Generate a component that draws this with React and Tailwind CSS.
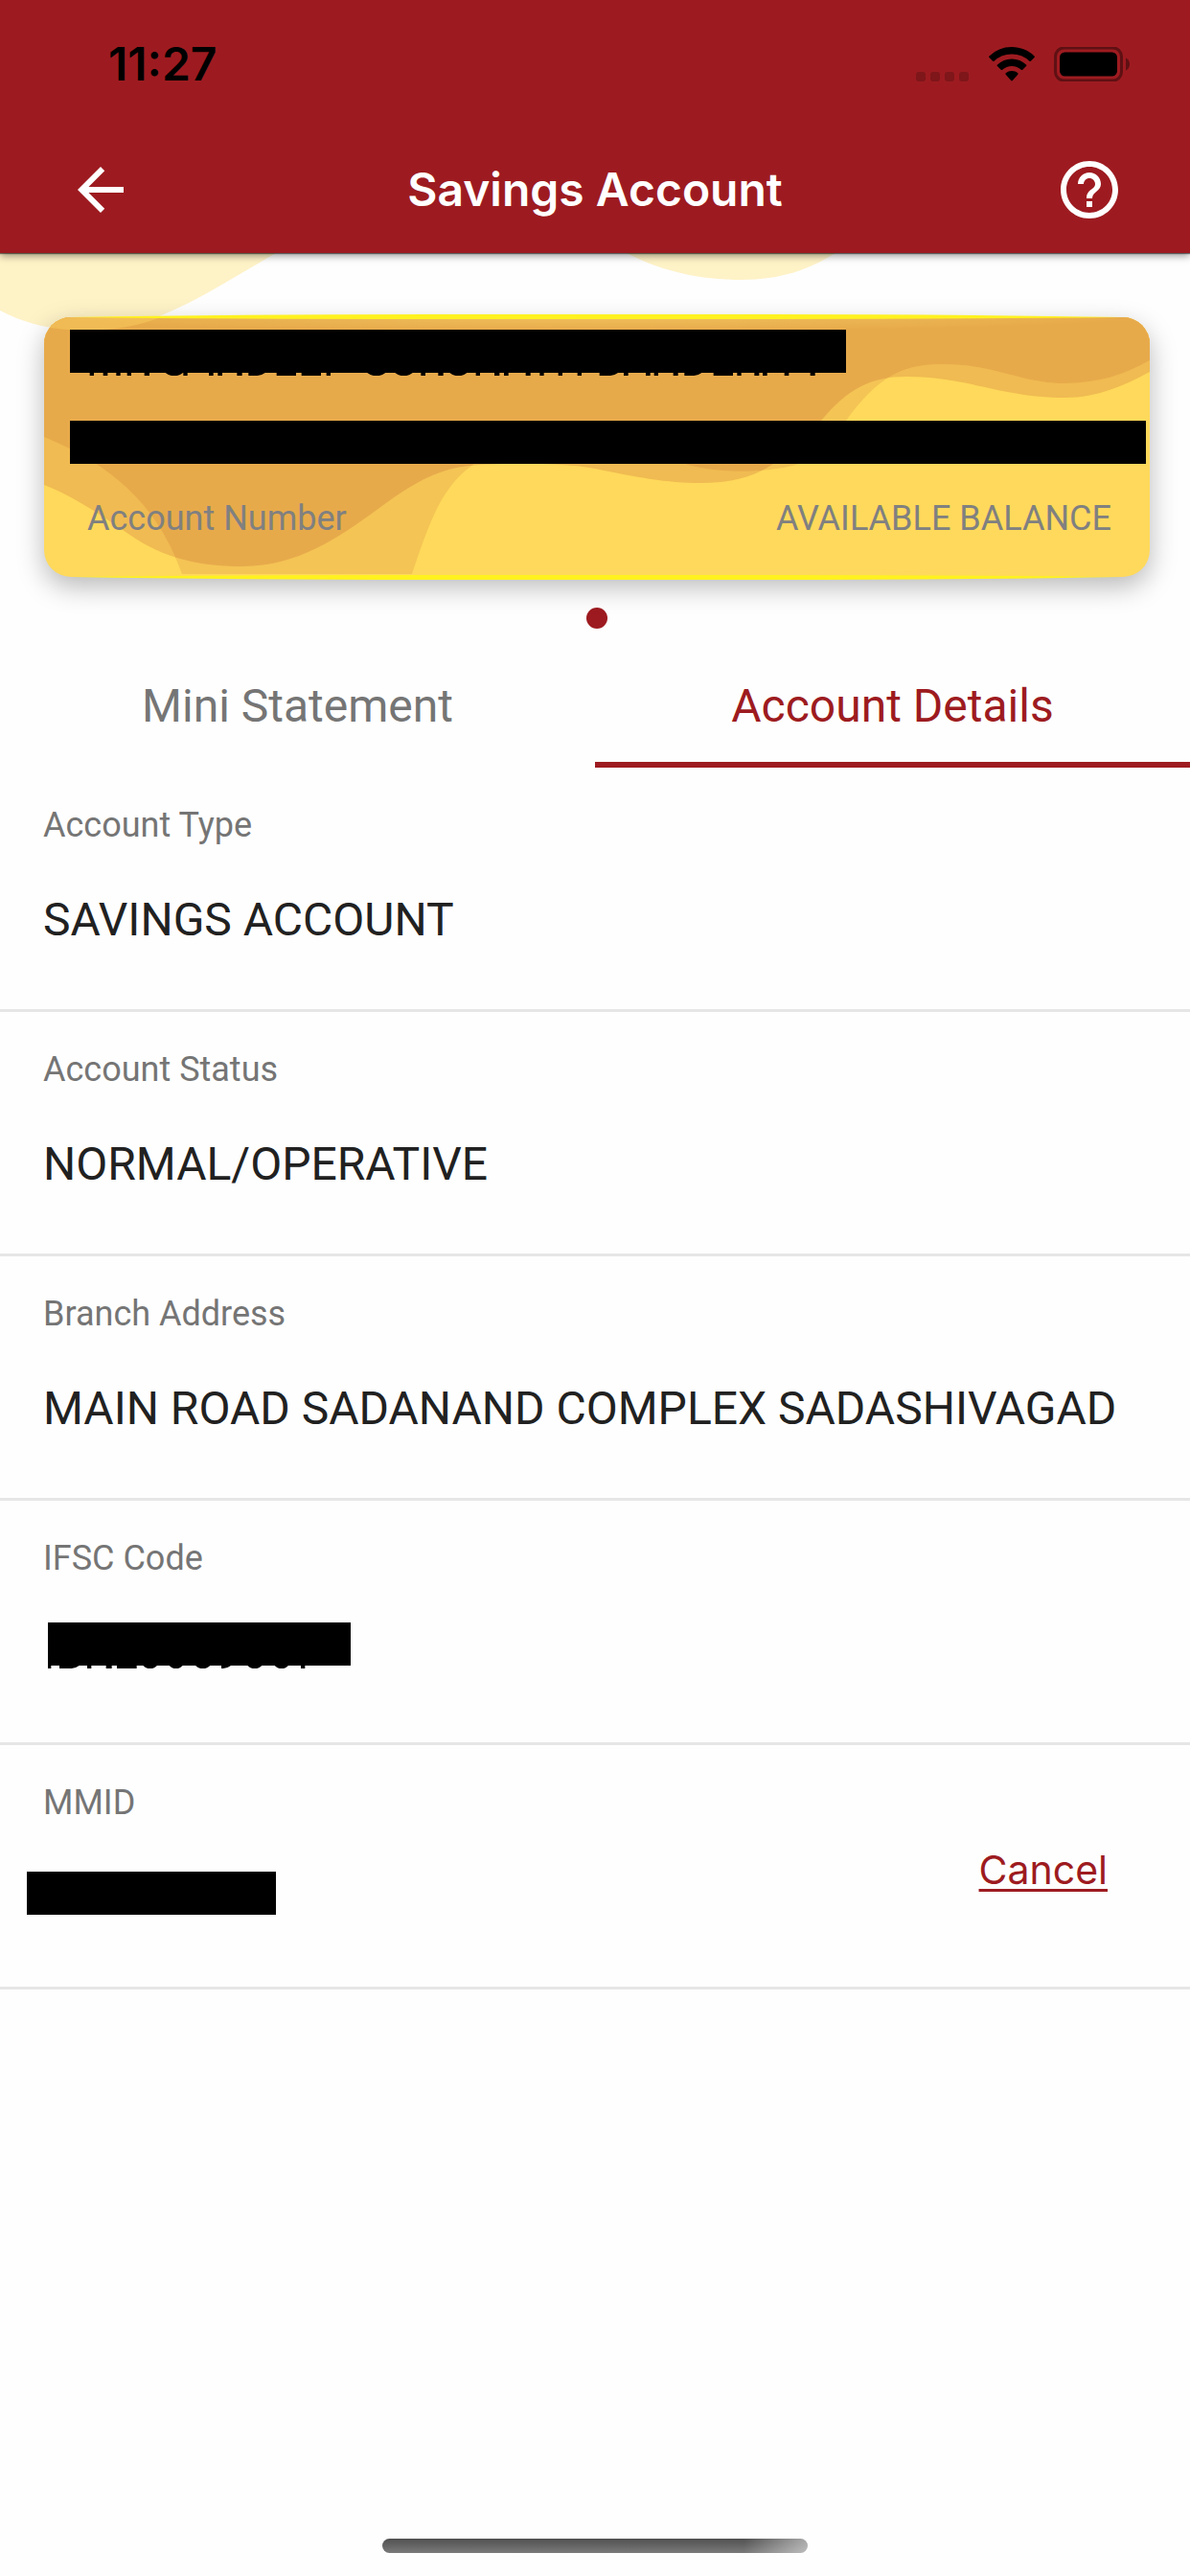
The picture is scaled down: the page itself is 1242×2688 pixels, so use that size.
import React from "react";
import { MdArrowBack, MdHelpOutline } from "react-icons/md";

const rows = [
  { label: "Account Type", value: "SAVINGS ACCOUNT" },
  { label: "Account Status", value: "NORMAL/OPERATIVE" },
  { label: "Branch Address", value: "MAIN ROAD SADANAND COMPLEX SADASHIVAGAD" },
];

function StatusBar() {
  return (
    <div className="flex h-33 items-center justify-between pt-[2px] pr-[62px] pl-[113px]">
      <time className="font-['Inter',sans-serif] text-[48px] leading-[48px] font-semibold text-black">11:27</time>
      <div className="flex items-center gap-5">
        <svg className="h-9 w-14" viewBox="0 0 56 36" fill="#7e161a" aria-hidden="true">
          <rect x="0" y="26" width="10" height="10" rx="3" />
          <rect x="15" y="26" width="10" height="10" rx="3" />
          <rect x="30" y="26" width="10" height="10" rx="3" />
          <rect x="45" y="26" width="10" height="10" rx="3" />
        </svg>
        <svg className="h-9 w-12" viewBox="0 0 48 36" aria-label="Wi-Fi">
          <path d="M24 0c9 0 17.500 3.500 23.500 9.500.6.600.6 1 0 1.600l-3.600 3.600c-.5.500-1 .5-1.500 0A26.500 26.500 0 0 0 24 7.500a26.500 26.500 0 0 0-18.400 7.200c-.5.500-1 .5-1.500 0L.5 11.100c-.6-.6-.6-1 0-1.600A33.500 33.500 0 0 1 24 0Z" />
          <path d="M24 12.500c5.800 0 11 2.200 15 6 .6.500.6 1 0 1.600l-3.700 3.600c-.5.500-1 .5-1.500 0a14.500 14.500 0 0 0-19.600 0c-.5.500-1 .5-1.500 0L9 20.100c-.6-.6-.6-1.100 0-1.600a21.800 21.800 0 0 1 15-6Z" />
          <path d="M24 25c2.500 0 4.700.9 6.300 2.300.5.500.5 1 0 1.500l-5.500 6.300c-.5.500-1.100.5-1.600 0l-5.500-6.300c-.5-.5-.5-1 0-1.500A9.500 9.500 0 0 1 24 25Z" />
        </svg>
        <svg className="h-9 w-20" viewBox="0 0 80 36" aria-label="Battery full">
          <rect x="1.500" y="1" width="69" height="34" rx="9" fill="none" stroke="#5f1013" strokeWidth="3" />
          <rect x="6" y="5.500" width="60" height="25" rx="5.500" />
          <path d="M75 11.500c2.500 1 4 3.600 4 6.500s-1.500 5.500-4 6.500Z" fill="#5f1013" />
        </svg>
      </div>
    </div>
  );
}

const OUTER_WAVE =
  "M46 506C80 519 110 541 143 563C178 585 215 591 253 591C310 591 352 562 396 530C430 505 458 487 500 485C540 483 590 483 621 489C665 498 695 504 732 504C775 504 798 492 820 475C835 464 845 454 857 439C885 405 910 393 946 393C1010 393 1045 415 1112 415C1145 415 1174 402 1200 388V331H46Z";
const INNER_WAVE =
  "M46 456C125 488 167 535 190 599H430C448 545 461 509 491 487C540 445 640 460 718 485C750 494 797 494 831 485C850 478 867 459 883 439C915 395 940 380 983 380C1040 380 1065 400 1112 400C1145 400 1174 391 1200 376V331H46Z";

function CardArt() {
  return (
    <svg className="h-full w-full" viewBox="46 331 1154 271" preserveAspectRatio="none" aria-hidden="true">
      <defs>
        <clipPath id="outer-wave">
          <path d={OUTER_WAVE} />
        </clipPath>
        <radialGradient id="top-sheen" cx="0.5" cy="0" r="1" gradientTransform="translate(0.5 0) scale(0.5 1) translate(-0.5 0)">
          <stop offset="0" stopColor="#ffe070" stopOpacity="0.4" />
          <stop offset="1" stopColor="#ffe070" stopOpacity="0" />
        </radialGradient>
      </defs>
      <path fill="#f0bb52" d={OUTER_WAVE} />
      <path fill="#f4c455" d={INNER_WAVE} />
      <path fill="#e7aa4b" clipPath="url(#outer-wave)" d={INNER_WAVE} />
      <path fill="#f0bb54" d="M46 331H168Q145 340 119 343Q80 347 46 341Z" />
      <rect x="46" y="331" width="1154" height="14" fill="url(#top-sheen)" />
    </svg>
  );
}

/* Slivers under a redaction bar: start, width, and "r" for rounded, "w" for tapered */
const nameMarks = [
  [62, 13], [104, 14], [145, 13], [179, 13], [233, 16], [299, 55, "r"], [355, 13], [435, 14], [463, 14], [523, 16],
  [559, 52, "w"], [647, 61], [725, 61], [803, 13], [931, 57, "r"], [1018, 55, "r"], [1099, 14], [1153, 16], [1189, 54, "r"],
  [1271, 13], [1329, 16], [1359, 14], [1427, 15], [1471, 13], [1529, 13], [1589, 13], [1658, 58, "w"], [1734, 14],
  [1803, 14], [1829, 13], [1889, 15], [1924, 54, "w"], [2015, 61], [2089, 13], [2143, 15], [2169, 14], [2237, 14], [2318, 15],
];
const codeMarks = [
  [0, 10], [36, 62, "w"], [123, 13], [182, 18], [216, 62], [298, 44, "r"], [380, 42, "r"], [462, 46, "r"], [543, 30, "w"],
  [625, 45, "r"], [710, 43, "r"], [792, 13],
];

function Slivers({ marks, className, viewBox }) {
  return (
    <svg className={className} viewBox={viewBox} aria-hidden="true">
      {marks.map(([x, w, kind]) => {
        let d = `M${x} 0h${w}v9h${-w}Z`;
        if (kind === "r") d = `M${x} 0h${w}q${-w / 2} 20 ${-w} 0Z`;
        if (kind === "w") d = `M${x} 0h${w}q-12 9 -24 9H${x}Z`;
        return <path key={x} d={d} />;
      })}
    </svg>
  );
}

export default function App() {
  return (
    <div className="flex min-h-screen flex-col bg-[#fefefe] font-['Roboto',sans-serif]">
      <header className="relative z-10 bg-[#9d1b20] shadow-[0_1px_1px_rgba(0,0,0,0.5),0_3px_8px_rgba(0,0,0,0.4)]">
        <StatusBar />
        <div className="flex h-33 items-center justify-between px-[69px] text-white">
          <button type="button" aria-label="Back"><MdArrowBack className="size-18" /></button>
          <h1 className="font-['Inter',sans-serif] text-[48px] font-semibold">Savings Account</h1>
          <button type="button" aria-label="Help"><MdHelpOutline className="size-18" /></button>
        </div>
      </header>

      <section className="relative pt-[67px] pr-[42px] pl-[46px]">
        <svg className="absolute top-0 left-0 h-20 w-full" viewBox="0 264 1242 80" preserveAspectRatio="none" fill="#fef2c7" aria-hidden="true">
          <path d="M0 264H288C240 292 210 311 178 325C120 350 55 353 0 324Z" />
          <path d="M654 264C690 283 730 292 773 292C815 292 845 281 872 264Z" />
        </svg>
        <div className="relative h-[271px] rounded-[28px] bg-[#ffd95b] shadow-[0_10px_28px_rgba(0,0,0,0.28)]">
          <div className="absolute inset-0 overflow-hidden rounded-[28px]">
            <CardArt />
          </div>
          <svg className="absolute -top-1 left-0 h-[279px] w-full" viewBox="0 0 1154 279" preserveAspectRatio="none" fill="#fff21f" aria-hidden="true">
            <path d="M28 4Q200 1 400 1H754Q954 1 1126 4Q954 6 754 6H400Q200 6 28 4Z" />
            <path d="M28 275Q200 273 400 273H754Q954 273 1126 275Q954 278 754 278H400Q200 278 28 275Z" />
          </svg>
          <div className="relative flex h-full flex-col pt-[13px] pr-1 pl-[27px]">
            <div className="relative h-[45px] w-[810px] max-w-full bg-black" role="img" aria-label="Name hidden">
              <Slivers marks={nameMarks} viewBox="0 0 2430 9" className="absolute top-full left-0 h-[3px] w-full" />
            </div>
            <div className="mt-[50px] h-[45px] bg-black" role="img" aria-label="Account number and balance hidden" />
            <div className="mt-[33px] flex justify-between pr-9 pl-[18px] text-[36px] leading-[48px] text-[#808080]">
              <span>Account Number</span>
              <span>AVAILABLE BALANCE</span>
            </div>
          </div>
        </div>
      </section>

      <div className="mt-8 flex justify-center pl-1" aria-hidden="true">
        <span className="size-[22px] rounded-full bg-[#9d1b20]" />
      </div>

      <div role="tablist" className="mt-[13px] grid h-33 grid-cols-2 text-[48px]">
        <button type="button" role="tab" aria-selected="false" className="border-b-6 border-transparent pt-2.5 text-[#757575]">Mini Statement</button>
        <button type="button" role="tab" aria-selected="true" className="border-b-6 border-[#9d1b20] pt-2.5 text-[#9d1b20]">Account Details</button>
      </div>

      <dl>
        {rows.map((r) => (
          <div key={r.label} className="h-[255px] border-b-3 border-[#e6e6e6] px-[45px] pt-9">
            <dt className="text-[36px] leading-[48px] text-[#757575]">{r.label}</dt>
            <dd className="mt-[47px] text-[48px] leading-[56px] text-[#212121]">{r.value}</dd>
          </div>
        ))}
        <div className="h-[255px] border-b-3 border-[#e6e6e6] px-[45px] pt-9">
          <dt className="text-[36px] leading-[48px] text-[#757575]">IFSC Code</dt>
          <dd className="relative mt-[43px] ml-[5px] h-[45px] w-[316px] bg-black" aria-label="IFSC code hidden">
            <Slivers marks={codeMarks} viewBox="0 0 948 9" className="absolute top-full left-0 h-[3px] w-full" />
          </dd>
        </div>
        <div className="flex h-[255px] justify-between border-b-3 border-[#e6e6e6] pt-9 pr-[86px] pl-7">
          <div>
            <dt className="pl-[17px] text-[36px] leading-[48px] text-[#757575]">MMID</dt>
            <dd className="mt-12 h-[45px] w-[260px] bg-black" aria-label="MMID hidden" />
          </div>
          <dd className="mt-[66px]">
            <a href="#cancel" className="font-['Inter',sans-serif] text-[41px] leading-[56px] text-[#9d1b20] underline decoration-3 underline-offset-[5px] [text-decoration-skip-ink:none]">Cancel</a>
          </dd>
        </div>
      </dl>

      <div className="mt-auto flex justify-center pb-6">
        <div className="h-[15px] w-[444px] rounded-full bg-[linear-gradient(to_right,transparent_85%,rgba(255,255,255,0.5)),linear-gradient(#505050,#7a7a7a)]" />
      </div>
    </div>
  );
}
